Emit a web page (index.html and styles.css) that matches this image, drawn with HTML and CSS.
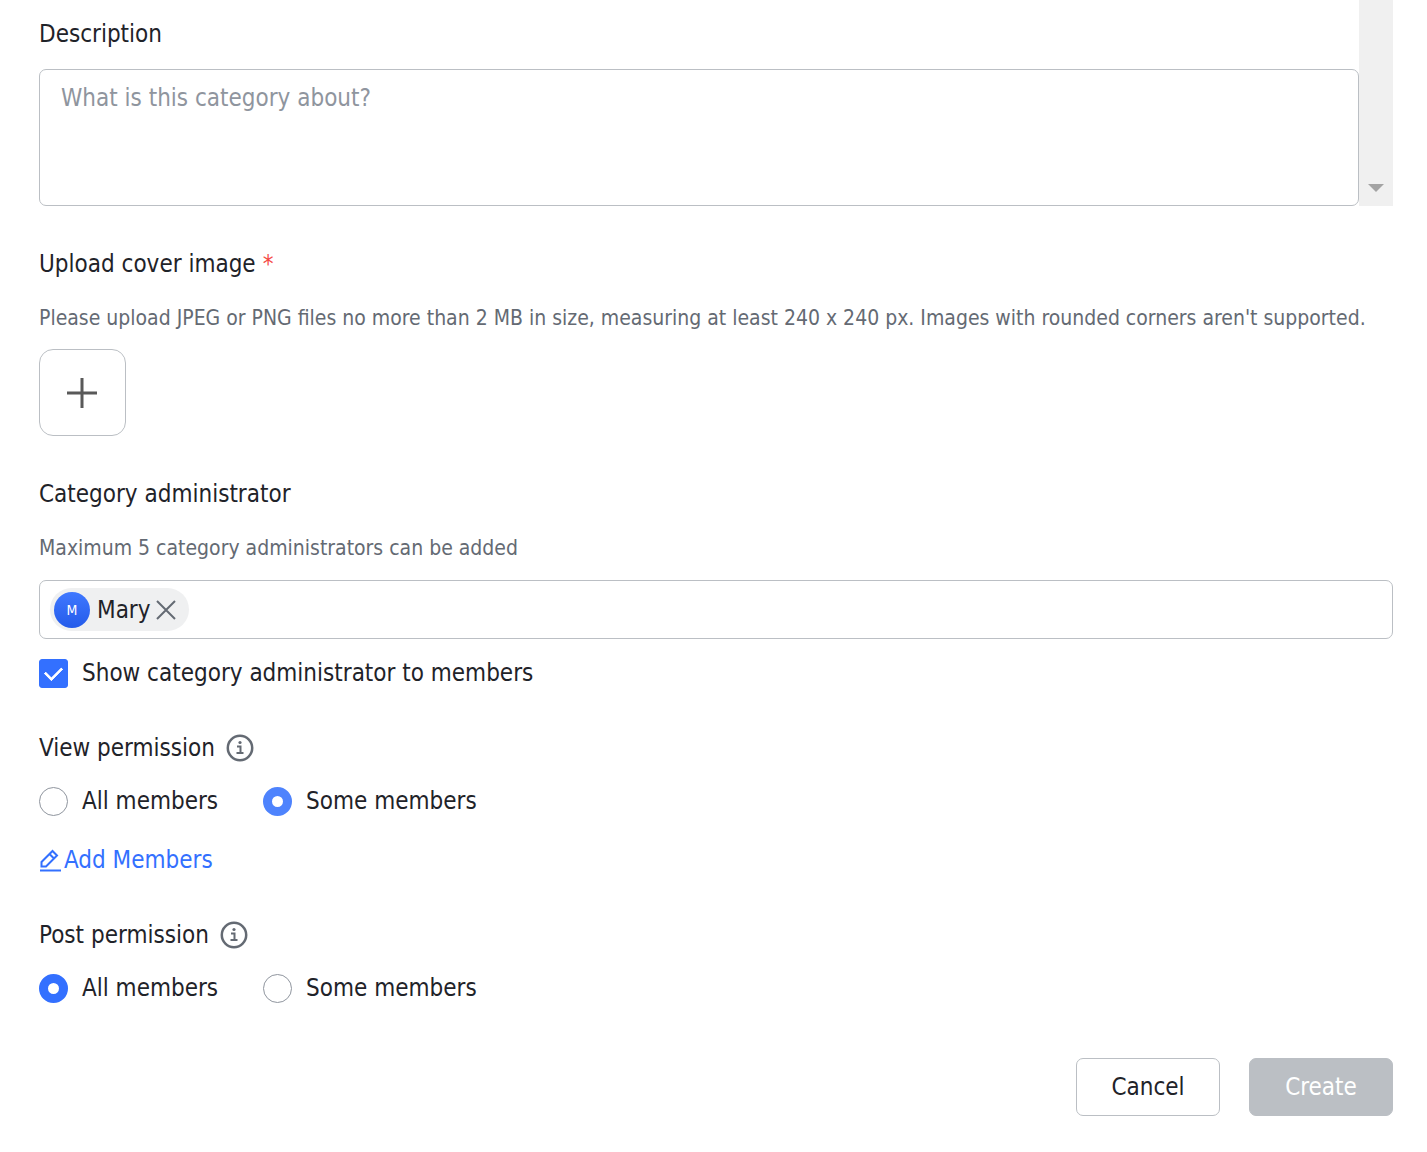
FILE: index.html
```html
<!DOCTYPE html>
<html lang="en">
<head>
<meta charset="utf-8">
<title>Create category</title>
<link rel="stylesheet" href="styles.css">
</head>
<body>
<form class="form">
  <div class="scroll-area">
    <div class="scroll-content">
      <label class="label" for="description">Description</label>
      <textarea class="textarea" id="description" placeholder="What is this category about?"></textarea>
    </div>
    <div class="scrollbar" aria-hidden="true">
      <svg width="16" height="8" viewBox="0 0 16 8"><path d="M0 0H16L8 8Z" fill="#a3a3a3"/></svg>
    </div>
  </div>

  <section class="field">
    <h2 class="label">Upload cover image<span class="required">*</span></h2>
    <p class="hint">Please upload JPEG or PNG files no more than 2 MB in size, measuring at least 240 x 240 px. Images with rounded corners aren't supported.</p>
    <button class="upload" type="button" aria-label="Upload cover image">
      <svg width="31" height="31" viewBox="0 0 31 31" stroke="#595959" stroke-width="3"><path d="M15 1V31M0 16H30"/></svg>
    </button>
  </section>

  <section class="field">
    <label class="label" for="admins">Category administrator</label>
    <p class="hint">Maximum 5 category administrators can be added</p>
    <div class="picker">
      <span class="chip">
        <span class="avatar">M</span>
        <span class="chip-name">Mary</span>
        <button class="chip-remove" type="button" aria-label="Remove Mary">
          <svg width="20" height="20" viewBox="0 0 20 20" stroke="#646a73" stroke-width="2" fill="none"><path d="M1 1L19 19M19 1L1 19"/></svg>
        </button>
      </span>
      <input class="picker-input" id="admins" type="text">
    </div>
    <label class="choice show-admin"><input class="checkbox" type="checkbox" checked>Show category administrator to members</label>
  </section>

  <fieldset class="field permission">
    <legend class="label">View permission
      <svg class="info" width="28" height="28" viewBox="0 0 28 28" fill="none" stroke="#646a73"><circle cx="14" cy="14" r="12.200" stroke-width="2.500"/><path d="M11 12.500H14.500V19M10.500 19H17.500" stroke-width="2"/><circle cx="14" cy="8.500" r="1.600" fill="#646a73" stroke="none"/></svg>
    </legend>
    <div class="choices">
      <label class="choice"><input class="radio" type="radio" name="view">All members</label>
      <label class="choice"><input class="radio radio-hover" type="radio" name="view" checked>Some members</label>
    </div>
    <a class="link" href="#add-members">
      <svg width="24" height="24" viewBox="0 0 24 24" fill="none" stroke="#3370ff" stroke-width="2"><path d="M1 22.500H22"/><path d="M2.500 18.500V14L13.500 3L18 7.500L7 18.500ZM10.500 6L15 10.500"/></svg>Add Members</a>
  </fieldset>

  <fieldset class="field permission">
    <legend class="label">Post permission
      <svg class="info" width="28" height="28" viewBox="0 0 28 28" fill="none" stroke="#646a73"><circle cx="14" cy="14" r="12.200" stroke-width="2.500"/><path d="M11 12.500H14.500V19M10.500 19H17.500" stroke-width="2"/><circle cx="14" cy="8.500" r="1.600" fill="#646a73" stroke="none"/></svg>
    </legend>
    <div class="choices">
      <label class="choice"><input class="radio" type="radio" name="post" checked>All members</label>
      <label class="choice"><input class="radio" type="radio" name="post">Some members</label>
    </div>
  </fieldset>

  <div class="actions">
    <button class="button" type="button">Cancel</button>
    <button class="button button-primary" type="submit" disabled>Create</button>
  </div>
</form>
</body>
</html>
```
FILE: styles.css
```css
* {
  box-sizing: border-box;
}

body {
  margin: 0;
  background: #fff;
  color: #1f2329;
  font: 24px/40px Tahoma, "DejaVu Sans Condensed", "Noto Sans", sans-serif;
}

button,
input,
textarea {
  margin: 0;
  color: inherit;
  font: inherit;
}

svg {
  display: block;
  flex: none;
}

.form {
  padding: 0 34px 36px 39px;
}

.scroll-area {
  display: flex;
}

.scroll-content {
  display: flex;
  flex: 1;
  flex-direction: column;
  gap: 15px;
  padding-top: 14px;
}

.scrollbar {
  display: flex;
  align-items: flex-end;
  justify-content: center;
  width: 34px;
  padding-bottom: 14px;
  background: #f0f0f0;
}

.label {
  display: flex;
  align-items: center;
  gap: 11px;
  margin: 0;
  padding: 0;
  font-size: 24px;
  font-weight: 400;
}

.textarea {
  display: block;
  width: 100%;
  height: 137px;
  padding: 8px 21px;
  border: 1px solid #bbbfc4;
  border-radius: 7px;
  background: #fff;
  resize: none;
}

.textarea::placeholder {
  color: #8f959e;
}

.field {
  margin: 38px 0 0;
  padding: 0;
  border: 0;
}

.required {
  margin-left: -4px;
  color: #f54a45;
}

.hint {
  margin: 18px 0 0;
  color: #646a73;
  font-size: 21px;
  line-height: 32px;
}

.upload {
  display: flex;
  align-items: center;
  justify-content: center;
  width: 87px;
  height: 87px;
  margin-top: 15px;
  padding: 0;
  border: 1px solid #bbbfc4;
  border-radius: 14px;
  background: #fff;
}

.picker {
  display: flex;
  align-items: center;
  height: 59px;
  margin-top: 16px;
  padding: 0 10px;
  border: 1px solid #bbbfc4;
  border-radius: 7px;
}

.chip {
  display: flex;
  align-items: center;
  height: 43px;
  padding: 0 13px 0 4px;
  border-radius: 22px;
  background: #eff0f1;
}

.avatar {
  width: 36px;
  height: 36px;
  border-radius: 50%;
  background: linear-gradient(#3f78ff, #245bea);
  color: #fff;
  font-size: 14px;
  line-height: 36px;
  text-align: center;
}

.chip-name {
  margin: 0 5px 0 7px;
}

.chip-remove {
  padding: 0;
  border: 0;
  background: none;
}

.picker-input {
  flex: 1;
  min-width: 0;
  border: 0;
  outline: 0;
  background: none;
}

.choice {
  display: flex;
  align-items: center;
  gap: 14px;
}

.show-admin {
  margin-top: 14px;
}

.checkbox,
.radio {
  flex: none;
  width: 29px;
  height: 29px;
  border: 1px solid #8f959e;
  background: #fff;
  appearance: none;
}

.checkbox {
  display: grid;
  place-items: center;
  border-radius: 3px;
}

.checkbox:checked {
  border-color: #3370ff;
  background: #3370ff;
}

.checkbox:checked::before {
  width: 14px;
  height: 8px;
  margin-bottom: 4px;
  border: solid #fff;
  border-width: 0 0 3px 3px;
  border-radius: 1px;
  content: "";
  rotate: -45deg;
}

.radio {
  border-radius: 50%;
}

.radio:checked {
  border: 9px solid #3370ff;
}

.radio-hover:checked {
  border-color: #4e83fd;
}

.permission {
  margin-top: 35px;
}

.choices {
  display: flex;
  gap: 45px;
  margin-top: 13px;
}

.link {
  display: inline-flex;
  align-items: center;
  gap: 1px;
  margin-top: 19px;
  color: #3370ff;
  text-decoration: none;
  vertical-align: top;
}

.actions {
  display: flex;
  justify-content: flex-end;
  gap: 29px;
  margin-top: 50px;
}

.button {
  width: 144px;
  height: 58px;
  padding: 0;
  border: 1px solid #bbbfc4;
  border-radius: 7px;
  background: #fff;
}

.button-primary {
  background: #bbbfc4;
  color: #fff;
}
```
